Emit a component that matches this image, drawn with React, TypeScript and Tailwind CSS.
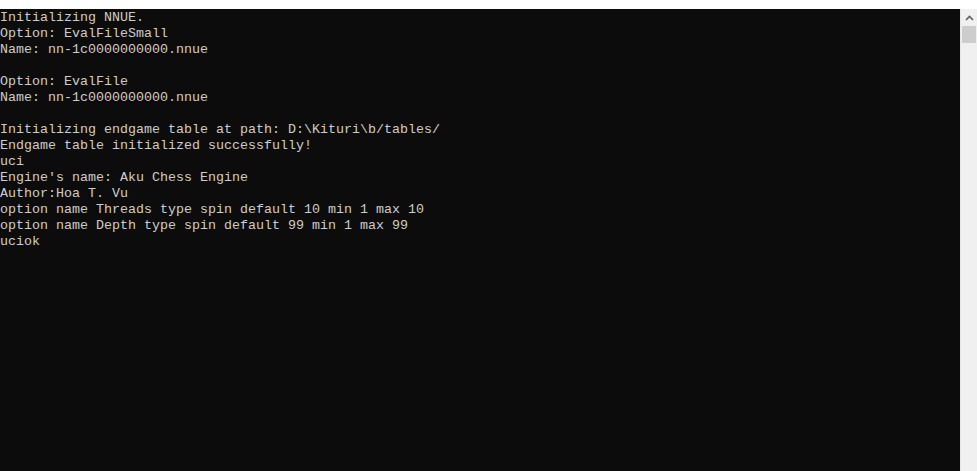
import React from "react";

const lines = [
  "Initializing NNUE.",
  "Option: EvalFileSmall",
  "Name: nn-1c0000000000.nnue",
  "",
  "Option: EvalFile",
  "Name: nn-1c0000000000.nnue",
  "",
  "Initializing endgame table at path: D:\\Kituri\\b/tables/",
  "Endgame table initialized successfully!",
  "uci",
  "Engine's name: Aku Chess Engine",
  "Author:Hoa T. Vu",
  "option name Threads type spin default 10 min 1 max 10",
  "option name Depth type spin default 99 min 1 max 99",
  "uciok",
];

export default function App() {
  return (
    <div className="flex h-[471px] w-[977px] flex-col overflow-hidden bg-white">
      <div className="h-[9px] shrink-0 bg-white" />
      <div className="flex min-h-0 flex-1">
        <div
          className="flex-1 bg-[#0c0c0c] pt-[1px] text-[13.33px] leading-[16px] text-[#cccccc]"
          style={{ fontFamily: '"Liberation Mono", "DejaVu Sans Mono", monospace' }}
        >
          {lines.map((l, i) => (
            <div key={i} className="h-[16px] whitespace-pre">
              {l}
            </div>
          ))}
        </div>
        <div className="flex w-[17px] shrink-0 flex-col border-l border-[#e6e6e6] bg-[#f0f0f0]">
          <div className="flex h-[17px] items-center justify-center">
            <svg width="9" height="6" viewBox="0 0 9 6">
              <path d="M1 5 L4.5 1.5 L8 5" fill="none" stroke="#606060" strokeWidth="1.6" />
            </svg>
          </div>
          <div className="mx-[1px] h-[17px] bg-[#cdcdcd]" />
        </div>
      </div>
    </div>
  );
}
